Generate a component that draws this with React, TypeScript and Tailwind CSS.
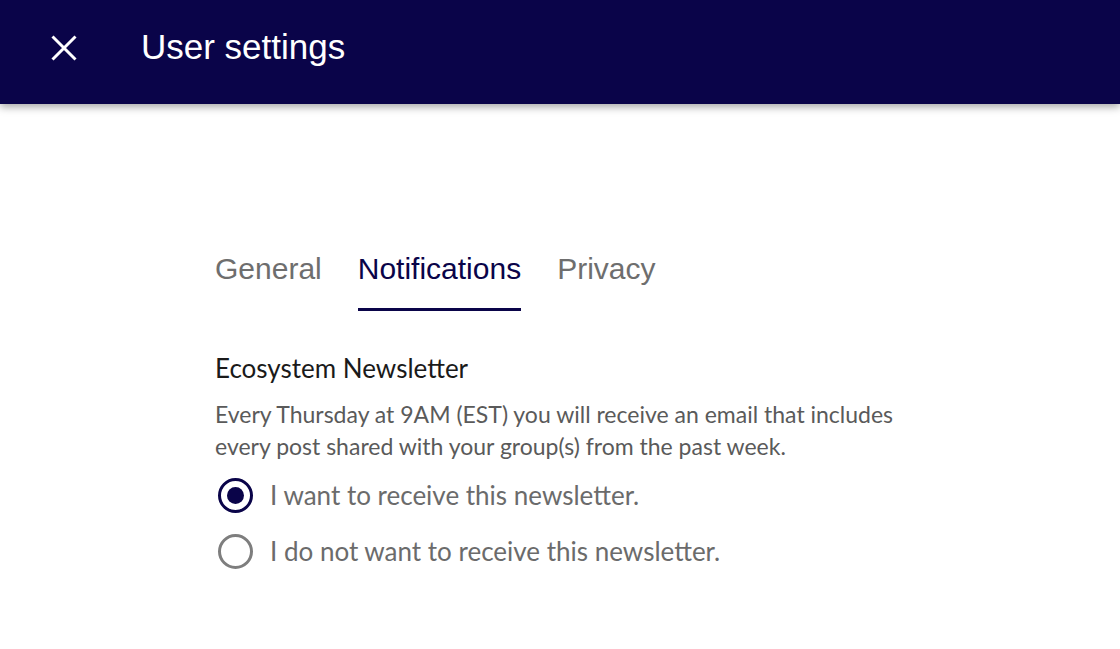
import { useState } from "react";

function CloseIcon() {
  return (
    <svg width="26" height="26" viewBox="0 0 26 26" fill="none">
      <path d="M1.5 1.5 L24.5 24.5 M24.5 1.5 L1.5 24.5" stroke="white" strokeWidth="3" />
    </svg>
  );
}

function Radio({ checked, label, onClick }: { checked: boolean; label: string; onClick: () => void }) {
  return (
    <button onClick={onClick} className="flex items-center gap-[17px] h-[56px] text-left">
      <span
        className={
          checked
            ? "w-[35px] h-[35px] rounded-full border-[3px] border-[#0a0449] flex items-center justify-center"
            : "w-[35px] h-[35px] rounded-full border-[3px] border-[#7e7e7e] flex items-center justify-center"
        }
      >
        {checked && <span className="w-[17px] h-[17px] rounded-full bg-[#0a0449]" />}
      </span>
      <span className="text-[26px] text-[#6b6b6b]">{label}</span>
    </button>
  );
}

export default function App() {
  const [tab, setTab] = useState("Notifications");
  const [choice, setChoice] = useState(0);
  const tabs = ["General", "Notifications", "Privacy"];

  return (
    <div className="min-h-[649px] bg-white font-['Lato',sans-serif]">
      {/* Top bar */}
      <header className="h-[104px] bg-[#0a0449] flex items-center shadow-[0_3px_8px_rgba(0,0,0,0.35)] relative z-10">
        <button className="ml-[51px] mr-[64px] mb-[8px]">
          <CloseIcon />
        </button>
        <h1 className="text-white text-[35px] font-['Liberation_Sans',Arial,sans-serif] mb-[10px]">User settings</h1>
      </header>

      <main className="pl-[215px] pt-[145px]">
        {/* Tabs */}
        <nav className="flex gap-[36px] font-['Liberation_Sans',Arial,sans-serif]">
          {tabs.map((t) => (
            <button
              key={t}
              onClick={() => setTab(t)}
              className={
                t === tab
                  ? "text-[30px] text-[#0a0449] border-b-[3px] border-[#0a0449] pb-[19px] leading-[40px]"
                  : "text-[30px] text-[#6e6e6e] border-b-[3px] border-transparent pb-[19px] leading-[40px]"
              }
            >
              {t}
            </button>
          ))}
        </nav>

        <section className="mt-[39px]">
          <h2 className="text-[26px] text-[#1a1a1a] leading-[36px]">Ecosystem Newsletter</h2>
          <p className="mt-[12px] text-[23px] text-[#5a5a5a] leading-[32px] w-[720px]">
            Every Thursday at 9AM (EST) you will receive an email that includes every post shared with your group(s) from the past week.
          </p>
          <div className="mt-[5px] ml-[3px] flex flex-col">
            <Radio checked={choice === 0} label="I want to receive this newsletter." onClick={() => setChoice(0)} />
            <Radio checked={choice === 1} label="I do not want to receive this newsletter." onClick={() => setChoice(1)} />
          </div>
        </section>
      </main>
    </div>
  );
}
